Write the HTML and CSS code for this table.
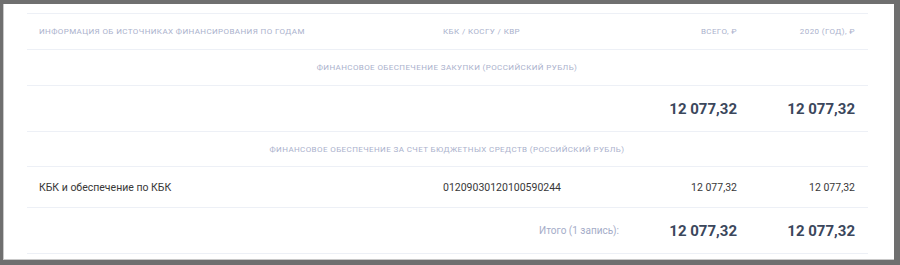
FILE: index.html
```html
<!DOCTYPE html>
<html lang="ru">
<head>
<meta charset="utf-8">
<link rel="stylesheet" href="styles.css">
</head>
<body>
<div class="card">
  <table class="fin">
    <colgroup>
      <col class="c1"><col class="c2"><col class="c3"><col class="c4">
    </colgroup>
    <thead>
      <tr class="head">
        <th class="left">Информация об источниках финансирования по годам</th>
        <th class="left">КБК / КОСГУ / КВР</th>
        <th class="right">Всего, ₽</th>
        <th class="right">2020 (год), ₽</th>
      </tr>
    </thead>
    <tbody>
      <tr class="section"><td colspan="4">Финансовое обеспечение закупки (Российский рубль)</td></tr>
      <tr class="sum">
        <td></td><td></td>
        <td class="right num-bold">12 077,32</td>
        <td class="right num-bold">12 077,32</td>
      </tr>
      <tr class="section s2"><td colspan="4">Финансовое обеспечение за счет бюджетных средств (Российский рубль)</td></tr>
      <tr class="data">
        <td>КБК и обеспечение по КБК</td>
        <td>01209030120100590244</td>
        <td class="right">12 077,32</td>
        <td class="right">12 077,32</td>
      </tr>
      <tr class="sum">
        <td></td>
        <td class="right total-label">Итого (1 запись):</td>
        <td class="right num-bold">12 077,32</td>
        <td class="right num-bold">12 077,32</td>
      </tr>
    </tbody>
  </table>
</div>
</body>
</html>
```

FILE: styles.css
```css
html, body {
  margin: 0;
  padding: 0;
}
body {
  background: #6f6f6f;
  padding: 4px 6px 5px 3px;
  height: 265px;
  box-sizing: border-box;
  font-family: Roboto, "Liberation Sans", sans-serif;
}
.card {
  background: #fff;
  border-left: 1px solid #c9c9c9;
  border-bottom: 1px solid #c9c9c9;
  height: 100%;
  box-sizing: border-box;
  padding: 9px 26px 0 23px;
}
.fin {
  width: 841px;
  border-collapse: collapse;
  table-layout: fixed;
  border-top: 1px solid #edf0f6;
}
.c1 { width: 404px; }
.c2 { width: 201px; }
.c3 { width: 118px; }
.c4 { width: 118px; }
.fin th, .fin td {
  padding: 0 13px 0 12px;
  border-bottom: 1px solid #edf0f6;
  vertical-align: middle;
}
.head th {
  height: 35px;
  font-size: 8px;
  font-weight: 400;
  text-transform: uppercase;
  letter-spacing: 0.4px;
  color: #aab1cc;
  white-space: nowrap;
}
.left { text-align: left; }
.right { text-align: right; }
.section td {
  height: 35px;
  text-align: center;
  font-size: 8px;
  text-transform: uppercase;
  letter-spacing: 0.4px;
  color: #aab1cc;
}
.section.s2 td { height: 34px; }
.sum td { height: 45px; }
.data td {
  height: 40px;
  font-size: 10.5px;
  color: #383838;
}
.num-bold {
  font-size: 15px;
  font-weight: 700;
  color: #3b475c;
}
.total-label {
  font-size: 10px;
  color: #a4acc8;
}
```
